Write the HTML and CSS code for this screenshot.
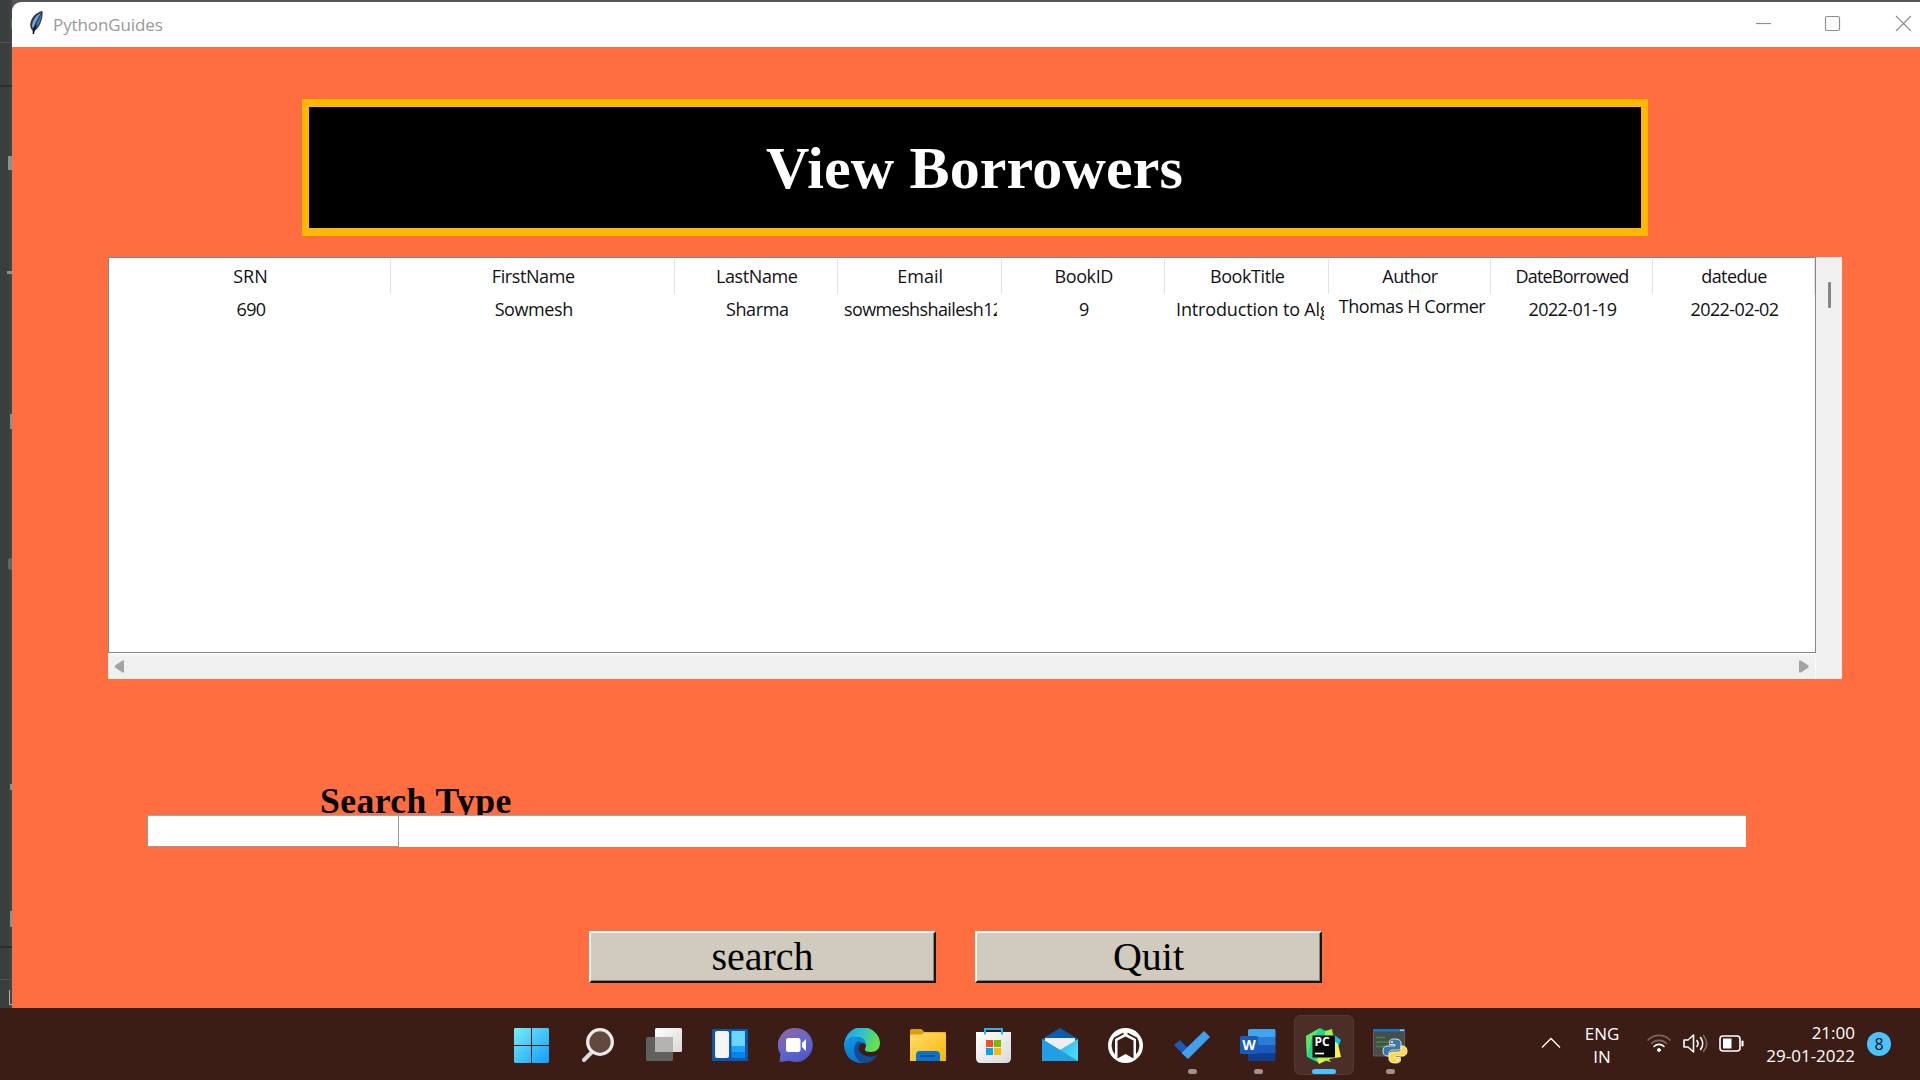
FILE: index.html
```html
<!DOCTYPE html>
<html lang="en">
<head>
<meta charset="utf-8">
<title>PythonGuides</title>
<link rel="stylesheet" href="styles.css">
</head>
<body>
<div class="desktop">
  <aside class="editor-edge">
    <i class="mark green"></i><i class="rule light"></i><i class="rule dark"></i><i class="mark tab"></i><i class="mark dash"></i><i class="mark tick"></i><i class="mark dot"></i><i class="mark small"></i><i class="mark tick2"></i><i class="rule dark2"></i><i class="rule light2"></i><i class="mark corner"></i>
  </aside>
  <main class="window">
    <header class="titlebar">
      <svg class="feather" width="16" height="26" viewBox="0 0 16 26"><path d="M13.5 1C7 2 1.500 8 1.200 15c0 2.500 1 4.500 2.300 5.500l.5 4 1-3.500c5-2 9.500-12 8.500-20z" fill="#34383f"/><path d="M12 3C7 5 3 11 3 17l1.500 1C6 13 8 9 12 3z" fill="#6ea8e6"/><path d="M12.500 4c0 5-2.500 11-6 14.500L8 12z" fill="#3c74c0"/><path d="M7 15C5.500 18 4.700 21 4.300 24" fill="none" stroke="#111" stroke-width="1.500"/></svg>
      <span class="caption">PythonGuides</span>
      <svg class="controls" width="160" height="20" viewBox="0 0 160 20" fill="none" stroke="#8f8f8f" stroke-width="1.200"><path d="M1 10.500h15"/><rect x="70.500" y="3.500" width="14" height="14" rx="1.500"/><path d="M141 3l15 15M156 3l-15 15"/></svg>
    </header>
    <section class="content">
      <h1 class="banner">View Borrowers</h1>
      <div class="table-frame">
        <div class="tree">
          <div class="row head"><span>SRN</span><span class="snug">FirstName</span><span class="snug">LastName</span><span>Email</span><span class="snug">BookID</span><span class="snug">BookTitle</span><span class="snug">Author</span><span class="tightest">DateBorrowed</span><span class="tight">datedue</span></div>
          <div class="row data"><span class="tight">690</span><span class="snug">Sowmesh</span><span class="snug">Sharma</span><span class="cut tight"><b>sowmeshshailesh12</b></span><span>9</span><span class="cut title"><b>Introduction to Alg</b></span><span class="raised">Thomas H Cormer</span><span class="tight">2022-01-19</span><span class="tight">2022-02-02</span></div>
        </div>
        <div class="vbar"><i></i></div>
        <div class="hbar"><svg width="9" height="13" viewBox="0 0 9 13"><path d="M9 .5v12H7.500L0 7.500v-2L7.500.5z" fill="#a3a3a3"/></svg><svg width="10" height="13" viewBox="0 0 10 13"><path d="M0 .5v12h2L9.500 7.500v-2L2 .5z" fill="#a3a3a3"/></svg></div>
      </div>
      <div class="search-label">Search Type</div>
      <div class="entry-row"><div class="entry"></div></div>
      <div class="buttons"><button>search</button><button>Quit</button></div>
    </section>
  </main>
  <footer class="taskbar">
    <nav class="apps">
      <span class="app"><svg width="36" height="36" viewBox="0 0 36 36"><defs><linearGradient id="win" x1="0" y1="0" x2="1" y2="1" gradientUnits="objectBoundingBox"><stop stop-color="#77eef8"/><stop offset="1" stop-color="#109cff"/></linearGradient></defs><path d="M1 0h16v17H0V1zM18 0h16l1 1v16H18zM0 18h17v17H1l-1-1zM18 18h17v16l-1 1H18z" fill="url(#win)"/></svg></span>
      <span class="app"><svg width="36" height="36" viewBox="0 0 36 36"><path d="M12 24L4 32" stroke="#d7d9da" stroke-width="4" stroke-linecap="round"/><circle cx="20" cy="14" r="12.300" fill="#63483f" stroke="#ebebeb" stroke-width="3.300"/></svg></span>
      <span class="app"><svg width="38" height="36" viewBox="0 0 38 36"><defs><linearGradient id="tv" x2="1" y2="1"><stop stop-color="#fff"/><stop offset="1" stop-color="#d8d8d8"/></linearGradient></defs><rect x="1" y="9" width="27" height="24" rx="1.500" fill="#60605f"/><rect x="10" y="0" width="27" height="24" rx="1.500" fill="url(#tv)"/><path d="M10 9h18v15H11.500L10 22.500z" fill="#b5b3b2"/></svg></span>
      <span class="app"><svg width="36" height="36" viewBox="0 0 36 36"><rect y="1" width="36" height="32" rx="1" fill="#0859ad"/><rect x="3" y="3" width="14" height="27" rx="2" fill="#f5f5f5"/><path d="M19.500 3H33v15H19.500z" fill="#68d6ff"/><path d="M19.500 18H33v6H19.500z" fill="#1ca3f5"/><path d="M19.500 24H33v6H19.500z" fill="#0583e8"/></svg></span>
      <span class="app"><svg width="36" height="36" viewBox="0 0 36 36"><defs><linearGradient id="chat" x1=".2" x2=".7" y2="1"><stop stop-color="#8e63a4"/><stop offset=".5" stop-color="#6567c9"/><stop offset="1" stop-color="#5056c9"/></linearGradient></defs><path d="M18 0a17 17 0 1 1-6.500 32.800L1.500 34l1-8A17 17 0 0 1 18 0z" fill="url(#chat)"/><rect x="8" y="10" width="14.500" height="14" rx="2.500" fill="#fff"/><path d="M24 15l4-4v12l-4-4z" fill="#fff"/></svg></span>
      <span class="app"><svg width="36" height="36" viewBox="0 0 36 36"><defs><linearGradient id="eg" x2="1" y2=".3"><stop stop-color="#1d9fe5"/><stop offset=".5" stop-color="#2cc1d2"/><stop offset="1" stop-color="#66e04c"/></linearGradient><linearGradient id="eb" y2="1" x2=".5"><stop stop-color="#0f9ae6"/><stop offset="1" stop-color="#0870cc"/></linearGradient></defs><path d="M0 17C1 5 10-1 18-1c10 0 18 8 18 16 0 6-4 9-9 9-4 0-6-1-6-2 0-2 1-2 1-5-1-6-5-8-10-8-6 0-10 3-12 8z" fill="url(#eg)"/><path d="M0 16C2 10 8 8 13 9c5 0 9 4 9 8-5-5-10 0-9 5 1 8 10 12 20 5-3 5-9 8-15 8C7 35 0 27 0 16z" fill="url(#eb)"/><path d="M14 13c-5 4-6 14 2 21 7 3 14-1 17-7-6 3-14 2-18-4-1-3 0-6 3-8z" fill="#124c98"/></svg></span>
      <span class="app"><svg width="36" height="36" viewBox="0 0 36 36"><defs><linearGradient id="fd" x2="1" y2="1"><stop stop-color="#ffdc72"/><stop offset="1" stop-color="#f9b700"/></linearGradient></defs><path d="M0 9V2.500Q0 1 1.500 1H11q1.500 0 3 3h21q1 0 1 1v4z" fill="#df9c05"/><path d="M0 8q0-1.500 1.500-1.500H11q2 0 3-2h21q1 0 1 1.500v27H0z" fill="url(#fd)"/><path d="M6 33V27q0-4 4-4h16q4 0 4 4v6z" fill="#0874cb"/><path d="M10 28h15" stroke="#064584" stroke-width="1.500"/></svg></span>
      <span class="app"><svg width="36" height="36" viewBox="0 0 36 36"><defs><linearGradient id="st" y2="1"><stop stop-color="#fff"/><stop offset="1" stop-color="#d9d9d9"/></linearGradient></defs><path d="M0 4h35v26q0 5-5 5H5q-5 0-5-5z" fill="url(#st)"/><path d="M9 6.500V1h17v5.500" fill="none" stroke="#23b4f1" stroke-width="2"/><path d="M10 12h7v7h-7z" fill="#f34f25"/><path d="M18 12h7v7h-7z" fill="#80b904"/><path d="M10 20h7v7h-7z" fill="#05a3ef"/><path d="M18 20h7v7h-7z" fill="#fdb805"/></svg></span>
      <span class="app"><svg width="36" height="36" viewBox="0 0 36 36"><defs><linearGradient id="ml" x2="1" y2=".5"><stop stop-color="#1f95df"/><stop offset="1" stop-color="#47d9f9"/></linearGradient></defs><path d="M0 11L18 0l18 11v6H0z" fill="#0a5cad"/><path d="M3 10h30v12H3z" fill="#eee"/><path d="M0 11l18 11 18-11v22H0z" fill="url(#ml)"/><path d="M0 11l36 22H1l-1-1z" fill="#229fe4"/></svg></span>
      <span class="app"><svg width="36" height="36" viewBox="0 0 36 36"><circle cx="17.500" cy="17.500" r="17.500" fill="#fff"/><path d="M15.500 4.500L6 9.500a14 14 0 0 0 1 17V11l8.500-4.500zM19.500 4.500L29 9.500a14 14 0 0 1-1 17V11l-8.500-4.500z" fill="#3b1d15"/><path d="M17.500 8.500L25.500 12.500V30.500l-8-4.500-8 4.500V12.500z" fill="#3b1d15"/></svg></span>
      <span class="app dot"><svg width="36" height="36" viewBox="0 0 36 36"><path d="M6 12.500L13 20 7.500 24 .5 17z" fill="#195abd" stroke="#195abd" stroke-linejoin="round"/><path d="M30 3.500l5.500 5.500L14 30.500 8 25z" fill="#40a1ee" stroke="#40a1ee" stroke-linejoin="round"/></svg></span>
      <span class="app dot"><svg width="36" height="36" viewBox="0 0 36 36"><path d="M9.500 1H34q1.500 0 1.500 1.500V9H8V2.500Q8 1 9.500 1z" fill="#41a5ee"/><path d="M8 9h27.500v8H8z" fill="#2b7cd3"/><path d="M8 17h27.500v8H8z" fill="#185abd"/><path d="M8 25h27.500v6.500q0 1.500-1.500 1.500H9.500Q8 33 8 31.500z" fill="#103f91"/><rect y="8" width="18" height="18" rx="1.500" fill="#185abd"/><text x="9" y="21.500" text-anchor="middle" class="word-letter">W</text></svg></span>
      <span class="app active"><svg width="38" height="38" viewBox="0 0 38 38"><path d="M1 9L15 1l9 5-2 25-8 5-12-6z" fill="#21d789"/><path d="M15 1L5 15 1 9zM1 9l5 5-4 16z" fill="#62e466"/><path d="M20 4l7-2 2 12-9-3z" fill="#9df04f"/><path d="M28 7l8 6-4 9-6-5z" fill="#07c3f2"/><path d="M29 14l4 3 3 13-12 2-10 5-2-5 9-7z" fill="#f1f746"/><path d="M13 30l8-2 5 7-12-3z" fill="#b5ef42"/><path d="M7.500 8.500H30v22H7.500z" fill="#070907"/><text x="9.500" y="19.300" class="pc">PC</text><path d="M10 26.500h9" stroke="#fff" stroke-width="1.700"/></svg></span>
      <span class="app dot"><svg width="36" height="36" viewBox="0 0 36 36"><path d="M1.500 1.500h31V28h-31z" fill="#494b4c" stroke="#6f7478" stroke-width=".7"/><path d="M1 1h32v2.500H1z" fill="#087bce"/><path d="M28 2.200h4" stroke="#cce8ff" stroke-width="1"/><path d="M4 9.500h9M4 14h16M4 18.500h11" stroke="#349339" stroke-width="1.300"/><g transform="translate(11 11)"><path d="M11.500 0C6 0 6.500 2.500 6.500 5.500H12V7H4C1 7 0 10 0 12s1 5 4 5h2v-3c0-2 2-3 4-3h5c2 0 3-1.500 3-3.500V4c0-3-3-4-6.500-4z" fill="#3976a8" stroke="#dce8ed"/><path d="M12.500 24c5.500 0 5-2.500 5-5.500H12V17h8c3 0 4-3 4-5s-1-5-4-5h-2v3c0 2-2 3-4 3H9c-2 0-3 1.500-3 3.500V20c0 3 3 4 6.500 4z" fill="#ffd94e" stroke="#f5efd4"/><circle cx="9" cy="3" r="1" fill="#fff"/><circle cx="15" cy="21" r="1" fill="#fff"/></g></svg></span>
    </nav>
    <div class="tray">
      <svg class="chev" width="20" height="12" viewBox="0 0 20 12"><path d="M1 10.500L10 1.500l9 9" fill="none" stroke="#fff" stroke-width="1.300"/></svg>
      <div class="lang"><span>ENG</span><span>IN</span></div>
      <svg class="status" width="98" height="24" viewBox="0 0 98 24" fill="none" stroke="#fff" stroke-width="1.600" stroke-linecap="round"><g stroke="#7c665f"><path d="M1 9a15.500 15.500 0 0 1 22 0"/><path d="M4.500 12.500a10.500 10.500 0 0 1 15 0"/></g><path d="M7 15.500a7 7 0 0 1 10 0"/><circle cx="12" cy="19" r="1.500" fill="#fff" stroke-width="1"/><path d="M37 9h4l5.500-5v17L41 16h-4z" stroke-linejoin="round"/><path d="M50 9.500q2 3 0 6M53.500 6.500q4.500 6 0 12"/><path d="M56.500 4.500q6.500 8 0 16" stroke="#7c665f"/><rect x="73" y="5" width="20" height="15" rx="3"/><path d="M76 7.500h8.500v10H76z" fill="#fff" stroke="none"/><path d="M95.500 10.500v4" stroke-width="2.200"/></svg>
      <div class="clock"><span class="time">21:00</span><span class="date">29-01-2022</span></div>
      <span class="count">8</span>
    </div>
  </footer>
</div>
</body>
</html>
```
FILE: styles.css
```css
* { box-sizing: border-box; }
body { margin: 0; font-family: "Open Sans", "Noto Sans", sans-serif; overflow: hidden; }
.desktop { width: 1920px; height: 1080px; display: grid; grid-template: 1008px 72px / 12px 1908px; background: #3c3f41; }

/* sliver of the editor behind the window */
.editor-edge { background: linear-gradient(90deg, #3a3d3e 0 8px, #454648); display: flex; flex-direction: column; align-items: flex-end; }
.editor-edge i { flex: none; }
.rule { width: 12px; height: 1px; background: #515355; }
.mark { width: 3px; background: #8d8f90; }
.green { width: 1px; height: 10px; margin-top: 19px; background: #4f7d58; }
.light { margin-top: 13px; }
.rule.dark { height: 2px; margin-top: 42px; background: #2d2e2f; }
.tab { width: 4px; height: 14px; margin-top: 69px; }
.dash { width: 5px; height: 3px; margin-top: 101px; }
.tick { width: 2px; height: 15px; margin-top: 140px; }
.mark.dot { height: 12px; width: 4px; margin-top: 129px; background: #626769; border-radius: 3px 0 0 3px; }
.small { width: 2px; height: 6px; margin-top: 214px; }
.tick2 { width: 2px; height: 16px; margin-top: 121px; }
.dark2 { margin-top: 19px; height: 2px; background: #2d2e2f; }
.light2 { margin-top: 31px; }
.corner { width: 3px; height: 15px; margin-top: 10px; background: none; border: solid #b0b1b2; border-width: 0 0 1px 1px; }

.window { display: flex; flex-direction: column; border-top: 2px solid #555456; background: #555456; }
.titlebar { flex: none; height: 45px; background: #fff; border-radius: 9px 0 0 0; display: flex; align-items: flex-start; padding: 8px 5px 0 17px; }
.caption { margin: 3px 0 0 8px; font-size: 17px; line-height: 23px; letter-spacing: -.1px; color: #999; }
.controls { margin: 3px 0 0 auto; }
.content { flex: 1; background: #ff6e41; display: flex; flex-direction: column; align-items: flex-start; }

.banner { margin: 52px 0 0 290px; width: 1346px; height: 137px; border: 8px solid #ffb900; border-width: 8px 7px 8px 7px; background: #000; color: #fff; font: bold 60px/122px "Liberation Serif", serif; letter-spacing: .15px; text-align: center; padding-right: 1px; }

.table-frame { margin: 21px 0 0 96px; display: grid; grid-template: 396px 26px / 1708px 26px; }
.tree { border: 1.500px solid #828790; background: #fff; padding-top: 1px; color: #111114; }
.row { display: grid; grid-template-columns: 282px 283.500px 163.500px 163.500px 163.500px 163.500px 162px 162px 162px; font-size: 18px; text-align: center; }
.row span { white-space: nowrap; padding-left: 2px; }
.head { height: 35px; line-height: 34px; }
.head span { border-right: 1px solid #e2e2e2; }
.data { height: 30px; line-height: 31px; }
.snug { letter-spacing: -.4px; }
.tight { letter-spacing: -.6px; }
.tightest { letter-spacing: -.8px; }
.row .cut { overflow: hidden; text-align: left; margin: 0 5px 0 6px; padding-left: 0; }
.row .title { margin-left: 11px; letter-spacing: -.15px; }
.cut b { font-weight: 400; }
.row .raised { line-height: 25px; letter-spacing: -.45px; padding-left: 5px; }
.vbar { grid-row: 1 / 3; grid-column: 2; background: #f0f0f0; padding: 25px 0 0 12px; }
.vbar i { display: block; width: 3px; height: 26px; background: #868686; border-radius: 1px; }
.hbar { grid-row: 2; background: #f0f0f0; border-top: 2px solid #f9f9f9; border-right: 1px solid #fafafa; display: flex; justify-content: space-between; align-items: center; padding: 0 6px 2px 7px; }

.search-label { margin: 105px 0 0 308px; height: 31px; overflow: hidden; font: bold 35.600px/34px "Liberation Serif", serif; letter-spacing: .45px; color: #000; }
.entry-row { margin-left: 135px; width: 1599px; height: 32px; background: #fff; border-top: 1px solid #a5a5a5; }
.entry { width: 252px; height: 31px; border: 1px solid #999; border-top: 0; }
.buttons { display: flex; gap: 39px; margin: 84px 0 0 577px; }
.buttons button { width: 347px; height: 52px; padding: 0; background: #d0cbbe; border: 2px solid; border-color: #fff #151515 #151515 #fff; box-shadow: inset -1px -1px #88857d; font: 40px/46px "Liberation Serif", serif; color: #000; }

.taskbar { grid-column: 1 / 3; background: #3b1d15; display: flex; color: #fff; }
.apps { display: grid; grid-template-columns: repeat(14, 66px); margin-left: 499px; }
.app { position: relative; display: flex; justify-content: center; align-items: flex-start; padding-top: 20px; }
.app.dot::after { content: ""; position: absolute; left: 29px; top: 61px; width: 9px; height: 5px; border-radius: 3px; background: #a1928d; }
.active { width: 60px; height: 60px; margin: 7px 0 0 3px; padding-top: 11px; background: #4a2e27; border: 1px solid #54382f; border-radius: 6px; }
.active::after { content: ""; position: absolute; left: 17px; top: 53px; width: 24px; height: 5px; border-radius: 3px; background: #4cc2ff; }
.word-letter { font: bold 14px "Open Sans", sans-serif; fill: #fff; }
.pc { font: bold 12px "Open Sans", sans-serif; fill: #fff; }
.tray { display: flex; font-size: 17px; line-height: 23px; margin-left: 118px; }
.chev { margin-top: 29px; }
.lang { margin: 14px 0 0 19px; width: 44px; display: flex; flex-direction: column; align-items: center; }
.status { margin: 23px 0 0 23px; }
.clock { margin: 13px 0 0 20px; width: 90px; display: flex; flex-direction: column; align-items: flex-end; }
.count { margin: 24px 0 0 12px; width: 24px; height: 24px; border-radius: 50%; background: #4cc2ff; color: #111; text-align: center; font-size: 16px; line-height: 24px; }
```
